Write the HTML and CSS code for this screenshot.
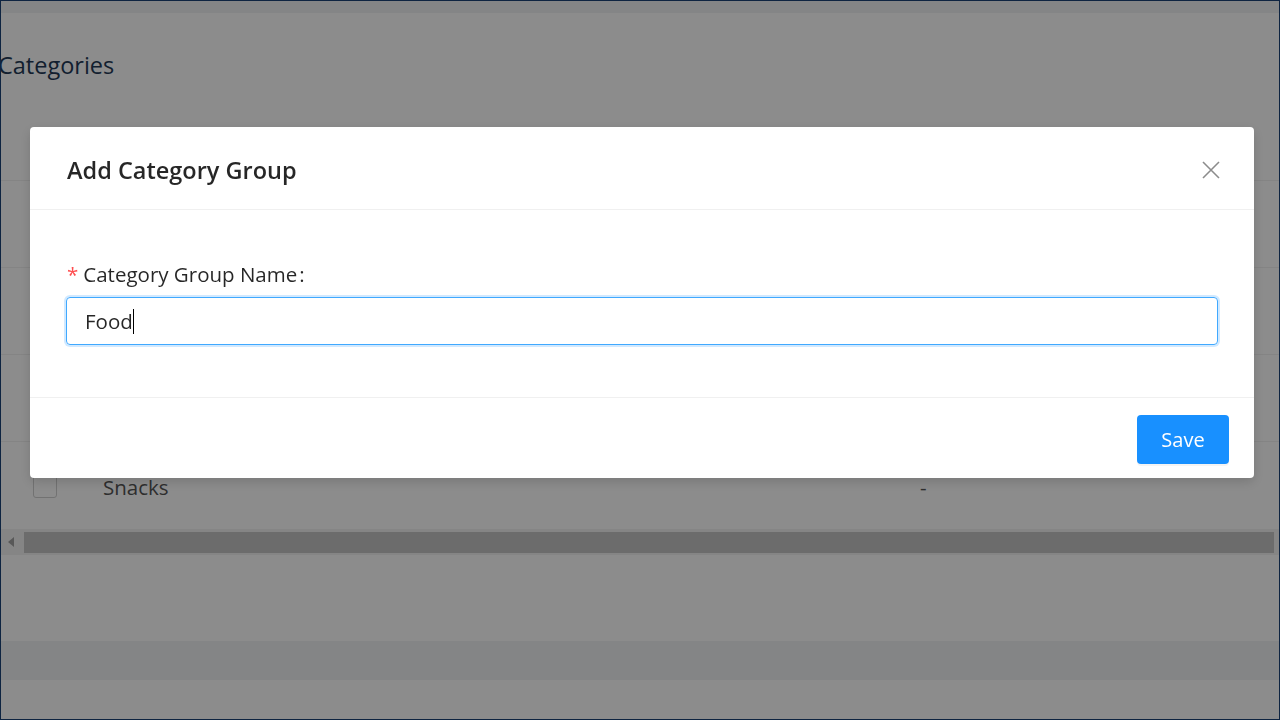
FILE: index.html
```html
<!DOCTYPE html>
<html>
<head>
	<title>Categories</title>
	<link rel="stylesheet" href="styles.css">
</head>
<body>
	<div class="frame">
		<div class="topbar"></div>
		<div class="content">
			<h2 class="page-title">Categories</h2>
			<div class="table">
				<div class="thead"></div>
				<div class="row"><span class="check"></span><span></span><span></span></div>
				<div class="row"><span class="check"></span><span></span><span></span></div>
				<div class="row"><span class="check"></span><span></span><span></span></div>
				<div class="row"><span class="check"></span><span>Snacks</span><span>-</span></div>
			</div>
			<div class="hscroll">
				<span class="arrow"></span>
				<span class="thumb"></span>
			</div>
		</div>
		<div class="band"></div>
	</div>

	<div class="mask"></div>

	<div class="modal-wrap">
		<div class="modal">
			<div class="modal-header">
				<h3 class="modal-title">Add Category Group</h3>
				<button class="close" aria-label="Close">
					<svg width="18" height="18" viewBox="0 0 18 18">
						<path d="M1 1L17 17M17 1L1 17" stroke="currentColor" stroke-width="1.6" fill="none"/>
					</svg>
				</button>
			</div>
			<div class="modal-body">
				<label class="field-label"><span class="req">*</span>Category Group Name<span class="colon">:</span></label>
				<div class="input">Food<span class="caret"></span></div>
			</div>
			<div class="modal-footer">
				<button class="btn-primary">Save</button>
			</div>
		</div>
	</div>
</body>
</html>
```

FILE: styles.css
```css
body{
	margin:0;
	font-family:"Open Sans", "Noto Sans", sans-serif;
	color:rgba(0,0,0,0.85);
}
.frame{
	height:720px;
	background:#fff;
	display:flex;
	flex-direction:column;
	overflow:hidden;
}
.frame::after{
	content:'';
	position:fixed;
	inset:0;
	border:1px solid #0e2441;
	z-index:20;
	pointer-events:none;
}
.topbar{
	height:13px;
	background:#f0f2f5;
	flex:none;
}
.content{
	flex:none;
}
.page-title{
	margin:37px 0 0 -2px;
	font-size:23.5px;
	font-weight:400;
	line-height:30px;
	color:#233a57;
}
.thead{
	height:100px;
	border-bottom:1px solid #f0f0f0;
}
.row{
	display:grid;
	grid-template-columns:70px 817px 1fr;
	align-items:center;
	box-sizing:border-box;
	height:87px;
	padding:3px 0 0 33px;
	border-bottom:1px solid #f0f0f0;
	font-size:20.5px;
	color:#555;
}
.row:last-child{
	border-bottom:none;
}
.check{
	width:22px;
	height:22px;
	border:1px solid #d0d0d0;
	border-radius:3px;
	margin-top:-3px;
}
.hscroll{
	height:26px;
	background:#f3f3f3;
	display:flex;
	align-items:center;
}
.arrow{
	width:0;
	height:0;
	border-top:5px solid transparent;
	border-bottom:5px solid transparent;
	border-right:6px solid #a0a0a0;
	margin:0 10px 0 8px;
}
.thumb{
	flex:1;
	height:21px;
	margin:1px 6px 0 0;
	background:#c5c5c5;
}
.band{
	height:39px;
	margin-top:86px;
	background:#f0f2f5;
}

.mask{
	position:fixed;
	inset:0;
	background:rgba(0,0,0,0.45);
	z-index:5;
}
.modal-wrap{
	position:fixed;
	inset:0;
	z-index:10;
	padding:127px 26px 0 30px;
}
.modal{
	background:#fff;
	border-radius:4px;
	box-shadow:0 4px 12px rgba(0,0,0,0.15);
}
.modal-header{
	display:flex;
	align-items:center;
	justify-content:space-between;
	height:83px;
	padding:4px 34px 0 37px;
	box-sizing:border-box;
	border-bottom:1px solid #f0f0f0;
}
.modal-title{
	margin:0;
	font-size:23.5px;
	font-weight:600;
	color:rgba(0,0,0,0.85);
}
.close{
	background:none;
	border:none;
	padding:0;
	color:rgba(0,0,0,0.45);
	display:flex;
}
.modal-body{
	padding:51px 36px 52px 36px;
	border-bottom:1px solid #f0f0f0;
}
.field-label{
	display:block;
	font-size:20.5px;
	line-height:26px;
	margin-left:1px;
	color:rgba(0,0,0,0.85);
}
.req{
	color:#ff4d4f;
	margin-right:5px;
}
.colon{
	margin:0 0 0 2px;
}
.input{
	margin-top:10px;
	height:46px;
	border:1px solid #40a9ff;
	border-radius:4px;
	box-shadow:0 0 0 2px rgba(24,144,255,0.2);
	padding:0 18px;
	display:flex;
	align-items:center;
	font-size:20.5px;
	color:rgba(0,0,0,0.85);
}
.caret{
	display:inline-block;
	width:1px;
	height:25px;
	background:#000;
}
.modal-footer{
	display:flex;
	justify-content:flex-end;
	padding:17px 25px 14px;
}
.btn-primary{
	width:92px;
	height:49px;
	background:#1890ff;
	border:none;
	border-radius:4px;
	color:#fff;
	font-family:inherit;
	font-size:20px;
	box-shadow:0 2px 0 rgba(0,0,0,0.045);
}
```
